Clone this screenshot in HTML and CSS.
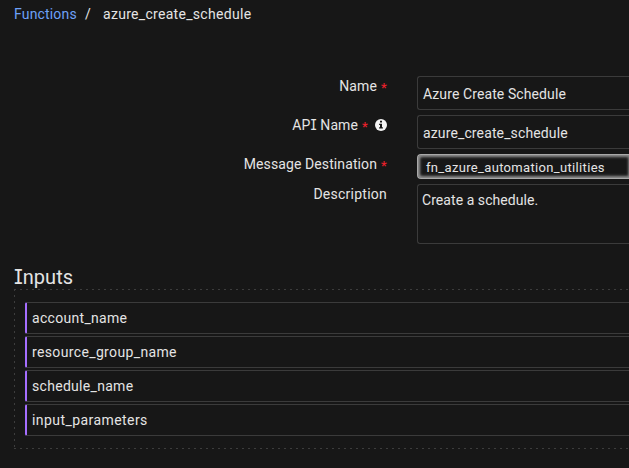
FILE: index.html
```html
<!DOCTYPE html>
<html lang="en">
<head>
<meta charset="utf-8">
<title>azure_create_schedule</title>
<link rel="stylesheet" href="styles.css">
</head>
<body>
<nav class="crumbs"><a class="crumb-link">Functions</a><span class="slash">/</span><span class="crumb-current">azure_create_schedule</span></nav>
<main>
  <form class="form">
    <label class="label"><span class="t-name">Name</span><span class="req">*</span></label>
    <div class="field field-name">Azure Create Schedule</div>
    <label class="label"><span class="t-api">AP<span class="cap-i">I</span> Name</span><span class="req">*</span>
      <svg class="info" viewBox="0 0 12 12"><circle cx="6" cy="6" r="6" fill="#f4f4f4"/><path d="M5 1.8h2v1.6H5zM4.1 4.7H7v3.5h.9v1.3H4.1V8.2H5V6h-.9z" fill="#161616"/></svg>
    </label>
    <div class="field field-api">azure_create_schedule</div>
    <label class="label"><span class="t-dest">Message Destination</span><span class="req">*</span></label>
    <div class="select">fn_azure_automation_utilities</div>
    <label class="label"><span class="t-desc">Description</span></label>
    <div class="textarea">Create a schedule.</div>
  </form>
  <h2 class="heading"><span class="cap-i">I</span>nputs</h2>
  <section class="inputs">
    <div class="item i1">account_name</div>
    <div class="item i2">resource_group_name</div>
    <div class="item i3">schedule_name</div>
    <div class="item i4">input_parameters</div>
  </section>
</main>
</body>
</html>
```

FILE: styles.css
```css
* { box-sizing: border-box; }
body {
  margin: 0;
  height: 468px;
  overflow: hidden;
  background: #171717;
  color: #e4e4e4;
  font: 14px/18px Roboto, "Liberation Sans", sans-serif;
  letter-spacing: .3px;
}
.cap-i { font-family: Inter, sans-serif; font-feature-settings: "cv08" 1; }
.crumbs { display: flex; height: 76px; padding: 5px 0 0 14px; }
.crumb-link { width: 71px; color: #6ea1f7; letter-spacing: .17px; }
.slash { width: 18px; }
.form {
  display: grid;
  grid-template-columns: 387px 212px;
  column-gap: 30px;
  row-gap: 5px;
  grid-template-rows: 34px 34px 25px 60px;
}
.label { display: flex; justify-content: flex-end; align-items: flex-start; padding-top: 1px; white-space: nowrap; }
.t-name, .t-api { letter-spacing: .1px; }
.t-dest { letter-spacing: .1px; }
.t-desc { letter-spacing: .25px; }
.req { width: 10px; padding: 2px 0 0 4px; color: #e8202b; font-size: 13px; font-weight: 500; letter-spacing: 0; }
.info { width: 12px; height: 12px; margin: 3px 0 0 7px; }
.field, .textarea { border: 1px solid #3b3b3b; border-right: 0; border-radius: 3px 0 0 3px; }
.field { padding: 8px 5px; }
.field-name { letter-spacing: .1px; }
.field-api { letter-spacing: .13px; }
.select {
  border: 1px solid #a9a9a9;
  border-right: 0;
  border-radius: 4px 0 0 4px;
  box-shadow: inset 2px 0 3px #8a8a8a, inset 0 2px 3px #8a8a8a, inset 0 -2px 3px #8a8a8a;
  padding: 4px 8px 2px;
  font-size: 13px;
  letter-spacing: .33px;
}
.textarea { padding: 6px 4px; letter-spacing: .06px; }
.heading { margin: 21px 0 0 14px; height: 24px; font-size: 20px; line-height: 24px; font-weight: 400; letter-spacing: 0; }
.inputs {
  display: grid;
  gap: 2px;
  grid-auto-rows: 32px;
  height: 160px;
  margin-left: 14px;
  padding: 13px 0 13px 11px;
  background:
    repeating-linear-gradient(90deg, #3d3d3d 0 2px, transparent 2px 6px) top / 100% 1px no-repeat,
    repeating-linear-gradient(90deg, #3d3d3d 0 2px, transparent 2px 6px) bottom / 100% 1px no-repeat,
    repeating-linear-gradient(#3d3d3d 0 2px, transparent 2px 6px) left / 1px 100% no-repeat;
}
.item {
  padding: 6px 5px;
  border: 1px solid #3b3b3b;
  border-right: 0;
  border-left: 2px solid #a56eff;
  border-radius: 2px 0 0 2px;
}
.i2 { letter-spacing: .36px; }
.i4 { letter-spacing: .43px; }
```
